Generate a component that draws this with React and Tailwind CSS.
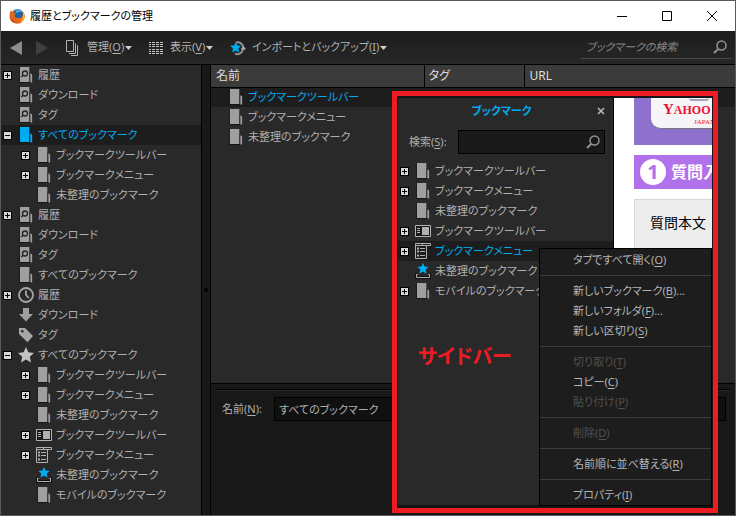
import React from "react";

function FolderIcon({ tone = "text-[#9f9f9f]", query = false }) {
  return (
    <svg viewBox="0 0 16 16" className={"h-4 w-4 " + tone} aria-hidden="true">
      <path d="M1.500 0H11v5l3.500 2v9h-13z" fill="#151515" />
      <path d="M2 0h9.300v15H2z" fill="currentColor" />
      <path d="M12.300 6l1.900 1.500V15.500h-1.900z" fill="currentColor" />
      {query && (
        <g fill="none" stroke="#242424" strokeWidth="1.300">
          <circle cx="7" cy="6.500" r="2.500" />
          <path d="M5.200 8.200L3.300 10" />
        </g>
      )}
    </svg>
  );
}

function ClockIcon() {
  return (
    <svg viewBox="0 0 16 16" className="h-4 w-4" aria-hidden="true" fill="none" stroke="#a6a6a6" strokeWidth="1.800">
      <circle cx="8" cy="8" r="7" />
      <path d="M8 3.500V8l2.800 3" />
    </svg>
  );
}

function DownloadIcon() {
  return (
    <svg viewBox="0 0 16 16" className="h-4 w-4" aria-hidden="true">
      <path d="M5 1h6v6h4l-7 7.500L1 7h4z" fill="#9f9f9f" />
    </svg>
  );
}

function TagIcon() {
  return (
    <svg viewBox="0 0 16 16" className="h-4 w-4" aria-hidden="true">
      <path d="M1 1h6l8 8-5.500 6.200L1 7z" fill="#a6a6a6" />
      <circle cx="4.300" cy="4.200" r="1.300" fill="#272727" />
    </svg>
  );
}

function StarIcon() {
  return (
    <svg viewBox="0 0 16 16" className="h-4 w-4" aria-hidden="true">
      <path d="M8 0l2.300 5.300 5.700.6-4.200 3.900 1.200 5.700L8 12.600l-5 2.900 1.200-5.700L0 5.900l5.700-.6z" fill="#c3c3c3" />
    </svg>
  );
}

function ToolbarIcon() {
  return (
    <svg viewBox="0 0 16 16" className="h-4 w-4" aria-hidden="true">
      <path d="M.5 2.500h15v11H.5z" fill="#181818" stroke="#b4b4b4" />
      <path d="M7 4h7v8H7z" fill="#b0b0b0" />
      <path d="M2 5.500h3M2 7.500h3M2 9.500h3" stroke="#b0b0b0" />
    </svg>
  );
}

function MenuIcon() {
  return (
    <svg viewBox="0 0 16 16" className="h-4 w-4" aria-hidden="true" fill="none" stroke="#b0b0b0">
      <path d="M.5.5h15v2H.5zM.5 2.500v13h11v-13" />
      <path d="M7.500 1v1.500" />
      <path d="M2 5.500h2M2 8.500h2M2 12.500h2" strokeWidth="2" />
      <path d="M5 5.500h5M5 8.500h5M5 12.500h5" />
    </svg>
  );
}

function UnsortedIcon() {
  return (
    <svg viewBox="0 0 16 16" className="h-4 w-4" aria-hidden="true">
      <path d="M1.500 10.500v4h13v-4" fill="none" stroke="#101010" strokeWidth="3" />
      <path d="M3 11.500H1.500v3h13v-3H13" fill="none" stroke="#b0b0b0" />
      <path d="M8 0l1.700 3.400 3.900.5-2.900 2.700.8 3.900L8 8.700l-3.500 1.800.8-3.900L2.400 3.900l3.900-.5z" fill="#00acf0" />
    </svg>
  );
}

function SearchIcon() {
  return (
    <svg viewBox="0 0 14 14" className="h-3.5 w-3.5 shrink-0" aria-hidden="true" fill="none" stroke="#929292">
      <circle cx="8.500" cy="5.500" r="4.500" strokeWidth="1.500" />
      <path d="M5.200 9L1 13" strokeWidth="2" />
    </svg>
  );
}

function FirefoxIcon() {
  return (
    <svg viewBox="0 0 16 16" className="h-4 w-4" aria-hidden="true">
      <circle cx="8.500" cy="7" r="6" fill="#1d62a8" />
      <path d="M6 2c3-1.500 6-.4 7 2-2-.6-4 .2-5 1.500z" fill="#4fa6dc" />
      <path d="M1.500 2.500c.5.8 1.200 1 2 1 1-.8 2-.7 2.600-.5-.8.500-1 1.200-1 1.800l2 .6-1.600 1.800c0 2.300 1.800 3.200 3.600 2.600 1-.3 1.800-.2 2.400.2 2.600-1.300 3-4.400 1.800-6.900 1.500 1.100 2.500 3.200 2.400 5.400-.2 4-3.400 7.200-7.600 7.200S.6 12.500.6 8.300c0-2.500.3-4.300.9-5.800z" fill="#e4681c" />
      <path d="M13.600 3.800c1.500 1.300 2.200 3.200 1.800 5.300-.5 2.600-2.600 4.300-4.800 4.700 3-1.800 4.300-5.600 3-10z" fill="#fbc02a" />
      <path d="M1.300 8c.5 3.600 3 5.800 6.300 5.900-3.500 1.300-6.800-1.500-6.300-5.900z" fill="#b52a20" />
    </svg>
  );
}

const icons = {
  folder: <FolderIcon />,
  active: <FolderIcon tone="text-[#00acf0]" />,
  query: <FolderIcon query />,
  clock: <ClockIcon />,
  download: <DownloadIcon />,
  tag: <TagIcon />,
  star: <StarIcon />,
  toolbar: <ToolbarIcon />,
  menu: <MenuIcon />,
  unsorted: <UnsortedIcon />,
};

function Expander({ open, label }) {
  return (
    <button type="button" aria-label={label} aria-expanded={open} className="flex h-[9px] w-[9px] shrink-0 items-center justify-center border border-black bg-[#d8d8d8]">
      <svg viewBox="0 0 7 7" className="h-[7px] w-[7px] shrink-0" stroke="#000" aria-hidden="true">
        <path d="M1 3.500h5" />
        {!open && <path d="M3.500 1v5" />}
      </svg>
    </button>
  );
}

function Row({ icon, text, state, depth = 0, selected = false }) {
  return (
    <li className={"flex h-5 items-center whitespace-nowrap pl-[2px] " + (selected ? "bg-[#1d1d1d] text-[#00acf0]" : "")}>
      {depth === 1 && <span className="w-[18px] shrink-0" />}
      <span className="flex w-[15px] shrink-0">
        {state && <Expander open={state === "open"} label={text} />}
      </span>
      <span className="mr-1 shrink-0">{icons[icon]}</span>
      {text}
    </li>
  );
}

const library = [
  { icon: "query", text: "履歴", state: "closed" },
  { icon: "query", text: "ダウンロード" },
  { icon: "query", text: "タグ" },
  { icon: "active", text: "すべてのブックマーク", state: "open", selected: true },
  { icon: "folder", text: "ブックマークツールバー", state: "closed", depth: 1 },
  { icon: "folder", text: "ブックマークメニュー", state: "closed", depth: 1 },
  { icon: "folder", text: "未整理のブックマーク", depth: 1 },
  { icon: "query", text: "履歴", state: "closed" },
  { icon: "query", text: "ダウンロード" },
  { icon: "query", text: "タグ" },
  { icon: "folder", text: "すべてのブックマーク" },
  { icon: "clock", text: "履歴", state: "closed" },
  { icon: "download", text: "ダウンロード" },
  { icon: "tag", text: "タグ" },
  { icon: "star", text: "すべてのブックマーク", state: "open" },
  { icon: "folder", text: "ブックマークツールバー", state: "closed", depth: 1 },
  { icon: "folder", text: "ブックマークメニュー", state: "closed", depth: 1 },
  { icon: "folder", text: "未整理のブックマーク", depth: 1 },
  { icon: "toolbar", text: "ブックマークツールバー", state: "closed", depth: 1 },
  { icon: "menu", text: "ブックマークメニュー", state: "closed", depth: 1 },
  { icon: "unsorted", text: "未整理のブックマーク", depth: 1 },
  { icon: "folder", text: "モバイルのブックマーク", depth: 1 },
];

const sidebar = [
  { icon: "folder", text: "ブックマークツールバー", state: "closed" },
  { icon: "folder", text: "ブックマークメニュー", state: "closed" },
  { icon: "folder", text: "未整理のブックマーク" },
  { icon: "toolbar", text: "ブックマークツールバー", state: "closed" },
  { icon: "menu", text: "ブックマークメニュー", state: "closed", selected: true },
  { icon: "unsorted", text: "未整理のブックマーク" },
  { icon: "folder", text: "モバイルのブックマーク", state: "closed" },
];

const menuGroups = [
  [{ text: "タブですべて開く", hotkey: "O" }],
  [
    { text: "新しいブックマーク", hotkey: "B", tail: "..." },
    { text: "新しいフォルダ", hotkey: "F", tail: "..." },
    { text: "新しい区切り", hotkey: "S" },
  ],
  [
    { text: "切り取り", hotkey: "T", disabled: true },
    { text: "コピー", hotkey: "C" },
    { text: "貼り付け", hotkey: "P", disabled: true },
  ],
  [{ text: "削除", hotkey: "D", disabled: true }],
  [{ text: "名前順に並べ替える", hotkey: "R" }],
  [{ text: "プロパティ", hotkey: "I" }],
];

function Hotkey({ children }) {
  return (
    <>
      (<span className="underline underline-offset-2">{children}</span>)
    </>
  );
}

function ToolButton({ icon, text, hotkey, width }) {
  return (
    <button type="button" className={"flex shrink-0 items-center whitespace-nowrap " + width}>
      <span className="mr-[6px]">{icon}</span>
      <span>
        {text}
        <Hotkey>{hotkey}</Hotkey>
      </span>
      <svg viewBox="0 0 7 4" className="ml-px h-1 w-[7px] shrink-0" aria-hidden="true">
        <path d="M0 0h7L3.500 4z" fill="#d0d0d0" />
      </svg>
    </button>
  );
}

function TitleBar() {
  return (
    <header className="flex h-[30px] shrink-0 items-center bg-white pl-2 text-black">
      <FirefoxIcon />
      <h1 className="ml-[5px] grow whitespace-nowrap">履歴とブックマークの管理</h1>
      <div className="flex items-center">
        <button type="button" aria-label="最小化" className="flex w-[45px] justify-center">
          <svg viewBox="0 0 10 10" className="h-2.5 w-2.5" stroke="#000"><path d="M0 5.500h10" /></svg>
        </button>
        <button type="button" aria-label="最大化" className="flex w-[45px] justify-center">
          <svg viewBox="0 0 10 10" className="h-2.5 w-2.5" fill="none" stroke="#000"><path d="M.5.5h9v9h-9z" /></svg>
        </button>
        <button type="button" aria-label="閉じる" className="flex w-[46px] justify-center">
          <svg viewBox="0 0 10 10" className="h-2.5 w-2.5" stroke="#000"><path d="M0 0l10 10M10 0L0 10" /></svg>
        </button>
      </div>
    </header>
  );
}

function Toolbar() {
  return (
    <div className="flex h-[34px] shrink-0 items-center border-b border-black bg-linear-to-b from-[#1d1d1d] to-[#272727] pr-1 pl-[9px]">
      <button type="button" aria-label="戻る" className="w-[26px] shrink-0">
        <svg viewBox="0 0 12 14" className="h-3.5 w-3"><path d="M12 0v14L0 7z" fill="#8d8d8d" /></svg>
      </button>
      <button type="button" aria-label="進む" className="w-[29px] shrink-0">
        <svg viewBox="0 0 12 14" className="h-3.5 w-3"><path d="M0 0v14l12-7z" fill="#414141" /></svg>
      </button>
      <ToolButton
        width="w-[83px]"
        text="管理"
        hotkey="O"
        icon={
          <svg viewBox="0 0 16 16" className="h-4 w-4" fill="none" stroke="#b0b0b0" aria-hidden="true">
            <path d="M1.500.5h7v11h-7zM10 3.500h.5v10H4M12 5.500h.5v10H6" />
          </svg>
        }
      />
      <ToolButton
        width="w-[82px]"
        text="表示"
        hotkey="V"
        icon={
          <svg viewBox="0 0 16 16" className="h-4 w-4" stroke="#c4c4c4" aria-hidden="true">
            <path d="M1 2.500h14M1 4.500h14M1 6.500h14M1 9.500h14M1 11.500h14M1 13.500h14" strokeDasharray="2 1 3 1 3 1 3 9" />
          </svg>
        }
      />
      <ToolButton
        width="w-40"
        text="インポートとバックアップ"
        hotkey="I"
        icon={
          <svg viewBox="0 0 16 16" className="h-4 w-4" aria-hidden="true">
            <path d="M6 2.500a5.500 5.500 0 0 1 7 4M13 9a5.500 5.500 0 0 1-8 4.500" fill="none" stroke="#909090" strokeWidth="2" />
            <path d="M10.500 9.500h5.500L13.300 5.500z" fill="#b0b0b0" />
            <path d="M5.800 2l1.600 3.400 3.800.4-2.800 2.700.7 3.900-3.400-1.900-3.500 1.900.8-3.900L.2 5.800 4 5.400z" fill="#00acf0" />
          </svg>
        }
      />
      <div className="ml-auto flex h-[23px] w-[150px] shrink items-center border-b border-[#4a4a4a] pr-1 pl-[5px]">
        <input type="search" aria-label="ブックマークの検索" placeholder="ブックマークの検索" className="w-full min-w-0 bg-transparent italic outline-none placeholder:text-[#868686]" />
        <SearchIcon />
      </div>
    </div>
  );
}

function ContextMenu() {
  return (
    <div role="menu" className="absolute top-[152px] right-px w-[173px] border border-black bg-[#1d1d1d] pt-px">
      {menuGroups.map((group, i) => (
        <div key={i}>
          {i > 0 && <hr className="my-[5px] border-t border-[#3b3b3b]" />}
          {group.map((item) => (
            <button
              key={item.text}
              type="button"
              role="menuitem"
              disabled={item.disabled}
              className="flex h-5 w-full items-center whitespace-nowrap pl-[33px] text-left text-[#b4b4b4] disabled:text-[#505050]"
            >
              <span>
                {item.text}
                <Hotkey>{item.hotkey}</Hotkey>
                {item.tail}
              </span>
            </button>
          ))}
        </div>
      ))}
    </div>
  );
}

function WebPage() {
  return (
    <div className="min-w-0 grow overflow-hidden bg-white pl-5 whitespace-nowrap">
      <div className="h-[47px] overflow-hidden bg-[#8e70cd] pl-[17px]">
        <div className="h-[31px] w-24 rounded-b-[10px] border-b border-[#77777e] bg-[#f5f5f7] pl-3">
          <div className="ml-[26px] h-[3px] w-5 rounded-b-full border-b-2 border-[#a3a3bb]" />
          <div className="font-['Liberation_Serif',serif] font-bold text-[#ee1133]">
            <div className="text-xs leading-4"><span className="text-[15px] leading-4">Y</span>AHOO</div>
            <div className="pl-[31px] text-[7px] leading-[8px] font-normal">JAPAN</div>
          </div>
        </div>
      </div>
      <div className="mt-[10px] flex h-[34px] items-center bg-[#b071ea] pl-[6px] text-base font-bold text-white">
        <span className="mr-[5px] flex h-[26px] w-[26px] shrink-0 items-center justify-center rounded-full bg-white text-xl text-[#b071ea]">1</span>
        質問入
      </div>
      <div className="mt-[10px] h-80 border border-r-0 border-[#d6d6d6] bg-[#ededed] pt-[13px] pl-[15px] text-sm text-black">質問本文</div>
    </div>
  );
}

function SidebarShot() {
  return (
    <section className="absolute top-[90px] right-[17px] bottom-[2px] flex w-[326px] border-[5px] border-[#ed1c24] bg-[#151515] pt-[2px] pr-px pb-[3px]">
      <div className="w-[217px] shrink-0 border-x border-black bg-[#292929]">
        <div className="flex h-[26px] items-center pr-2">
          <h2 className="grow pl-2 text-center font-bold text-[#00acf0]">ブックマーク</h2>
          <button type="button" aria-label="サイドバーを閉じる" className="shrink-0">
            <svg viewBox="0 0 8 8" className="h-2 w-2" stroke="#b8b8b8" strokeWidth="1.600"><path d="M1 1l6 6M7 1L1 7" /></svg>
          </button>
        </div>
        <div className="mt-[6px] mb-[7px] flex items-center pr-2 pl-[11px]">
          <label htmlFor="side-search" className="w-[49px] shrink-0 whitespace-nowrap">
            検索<Hotkey>S</Hotkey>:
          </label>
          <div className="flex h-6 grow items-center border border-black bg-[#191919] pr-1">
            <input id="side-search" type="text" className="w-full min-w-0 bg-transparent px-1 outline-none" />
            <SearchIcon />
          </div>
        </div>
        <ul>{sidebar.map((r, i) => <Row key={i} {...r} />)}</ul>
        <p className="mt-[42px] pl-5 text-xl leading-7 font-bold text-[#ed1c24]">サイドバー</p>
      </div>
      <WebPage />
      <ContextMenu />
    </section>
  );
}

export default function App() {
  return (
    <div className="relative flex h-screen min-h-[516px] flex-col overflow-hidden border border-[#5a5a5c] bg-[#181818] font-['Noto_Sans','Noto_Sans_CJK_JP',sans-serif] text-[11px] text-[#b0b0b0] [font-feature-settings:'palt']">
      <TitleBar />
      <Toolbar />
      <div className="flex min-h-0 grow">
        <nav className="w-[200px] shrink-0 bg-[#292929]">
          <ul>{library.map((r, i) => <Row key={i} {...r} />)}</ul>
        </nav>
        <div className="flex w-[10px] shrink-0 items-center justify-center border-x border-black bg-[#181818]">
          <span className="h-1 w-1 rounded-full bg-black" />
        </div>
        <main className="flex min-w-0 grow flex-col">
          <div className="flex grow flex-col border-b border-black bg-[#292929]">
            <table className="w-full table-fixed border-collapse text-left">
              <thead>
                <tr className="h-[22px] border-b border-black bg-[#3b3b3b] text-xs text-[#dddddd]">
                  <th className="w-[213px] border-r border-black py-0 pl-[5px] font-normal">名前</th>
                  <th className="w-[100px] border-r border-black py-0 pl-1 font-normal">タグ</th>
                  <th className="py-0 pl-[5px] font-normal">URL</th>
                </tr>
              </thead>
              <tbody>
                {["ブックマークツールバー", "ブックマークメニュー", "未整理のブックマーク"].map((name, i) => (
                  <tr key={name} className={"h-5 " + (i === 0 ? "bg-[#1d1d1d] text-[#00acf0]" : "")}>
                    <td className="p-0" colSpan={3}>
                      <div className="flex items-center pl-[17px]">
                        <span className="mr-1 shrink-0">{icons.folder}</span>
                        {name}
                      </div>
                    </td>
                  </tr>
                ))}
              </tbody>
            </table>
          </div>
          <div className="h-[131px] shrink-0 px-[5px] pt-[5px]">
            <hr className="border-t border-b border-t-black border-b-[#2b2b2b]" />
            <div className="mt-[6px] flex items-center pr-1 pl-[6px]">
              <label htmlFor="entry-name" className="w-[52px] shrink-0 whitespace-nowrap">
                名前<Hotkey>N</Hotkey>:
              </label>
              <input id="entry-name" type="text" defaultValue="すべてのブックマーク" className="h-6 min-w-0 grow border border-black bg-[#101010] px-1 outline-none" />
            </div>
          </div>
        </main>
      </div>
      <SidebarShot />
    </div>
  );
}
